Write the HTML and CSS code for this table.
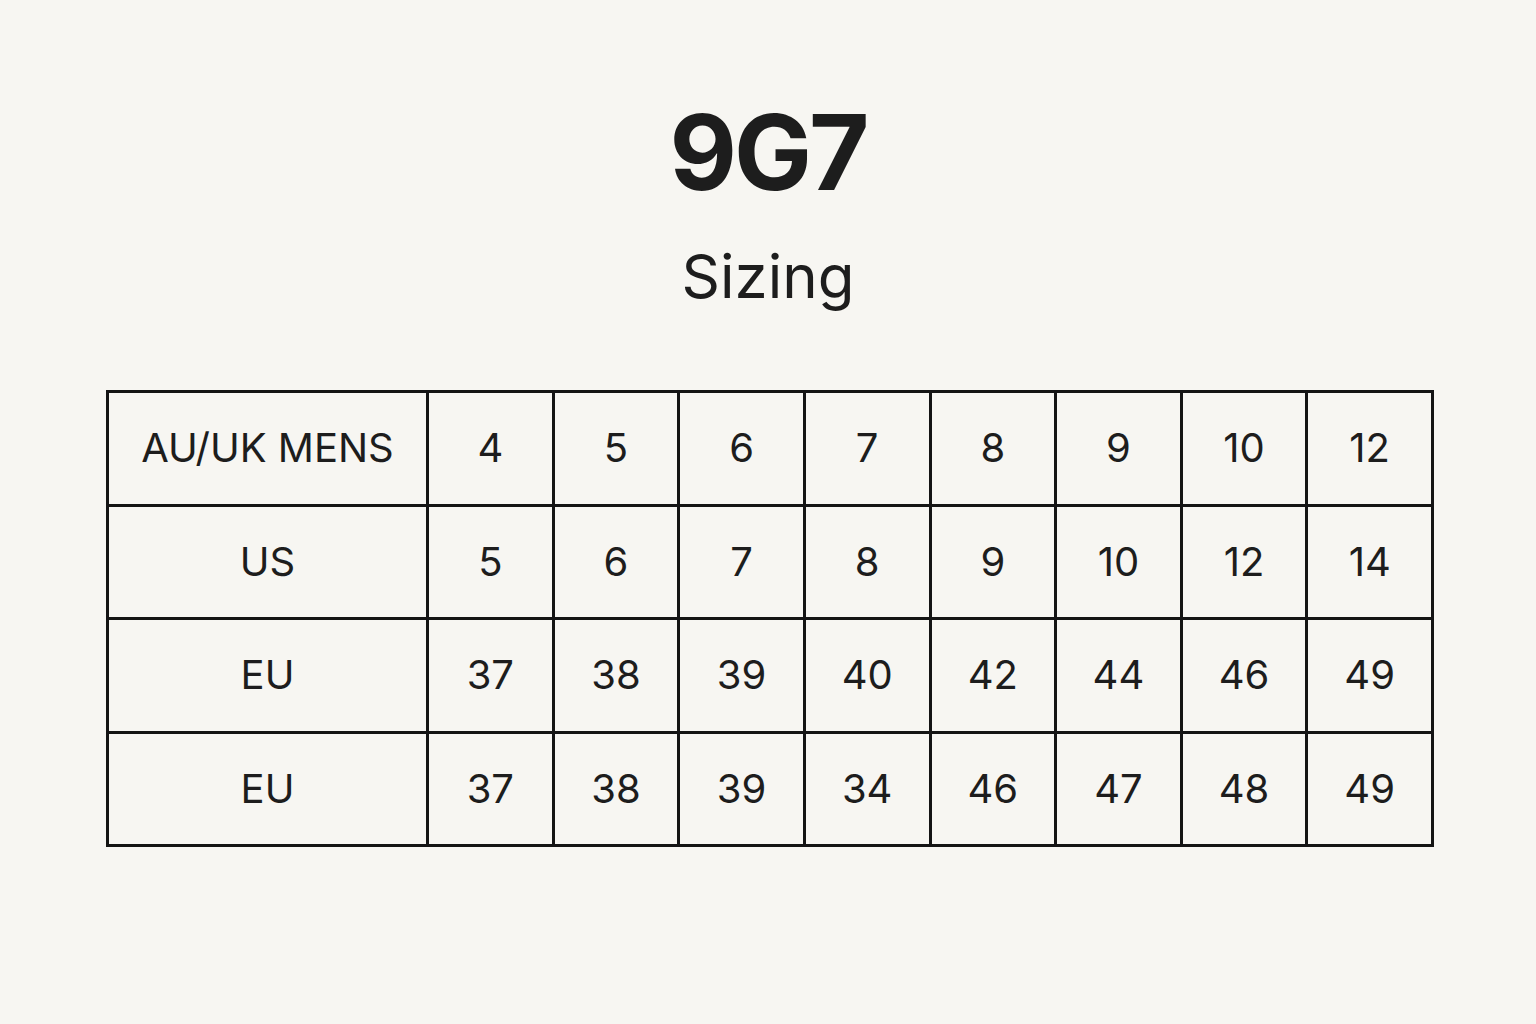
FILE: index.html
```html
<!DOCTYPE html>
<html lang="en">
<head>
<meta charset="utf-8">
<title>9G7 Sizing</title>
<link rel="stylesheet" href="styles.css">
</head>
<body>
<main class="page">
  <h1 class="title">9G7</h1>
  <h2 class="subtitle">Sizing</h2>
  <table class="sizes">
    <colgroup>
      <col class="col-label">
      <col><col><col><col><col><col><col><col>
    </colgroup>
    <tbody>
      <tr><th>AU/UK MENS</th><td>4</td><td>5</td><td>6</td><td>7</td><td>8</td><td>9</td><td>10</td><td>12</td></tr>
      <tr><th>US</th><td>5</td><td>6</td><td>7</td><td>8</td><td>9</td><td>10</td><td>12</td><td>14</td></tr>
      <tr><th>EU</th><td>37</td><td>38</td><td>39</td><td>40</td><td>42</td><td>44</td><td>46</td><td>49</td></tr>
      <tr><th>EU</th><td>37</td><td>38</td><td>39</td><td>34</td><td>46</td><td>47</td><td>48</td><td>49</td></tr>
    </tbody>
  </table>
</main>
</body>
</html>
```

FILE: styles.css
```css
html, body {
  margin: 0;
  padding: 0;
  background: #f7f6f2;
}

body {
  font-family: Inter, "Noto Sans", "Liberation Sans", sans-serif;
  color: #1d1d1d;
}

.page {
  width: 1536px;
  height: 1024px;
  padding-top: 100px;
  box-sizing: border-box;
  display: flex;
  flex-direction: column;
  align-items: center;
}

.title {
  margin: 0;
  font-size: 104px;
  line-height: 1;
  font-weight: 700;
  letter-spacing: -3px;
}

.subtitle {
  margin: 42px 0 0;
  font-size: 60px;
  line-height: 1;
  font-weight: 400;
}

.sizes {
  margin: 84px 0 0 4px;
  border-collapse: collapse;
  table-layout: fixed;
  width: 1328px;
}

.col-label {
  width: 320px;
}

.sizes th,
.sizes td {
  border: 3px solid #141414;
  height: 110.5px;
  padding: 0;
  text-align: center;
  vertical-align: middle;
  font-size: 40px;
  font-weight: 400;
  line-height: 1;
  color: #1d1d1d;
}
```
